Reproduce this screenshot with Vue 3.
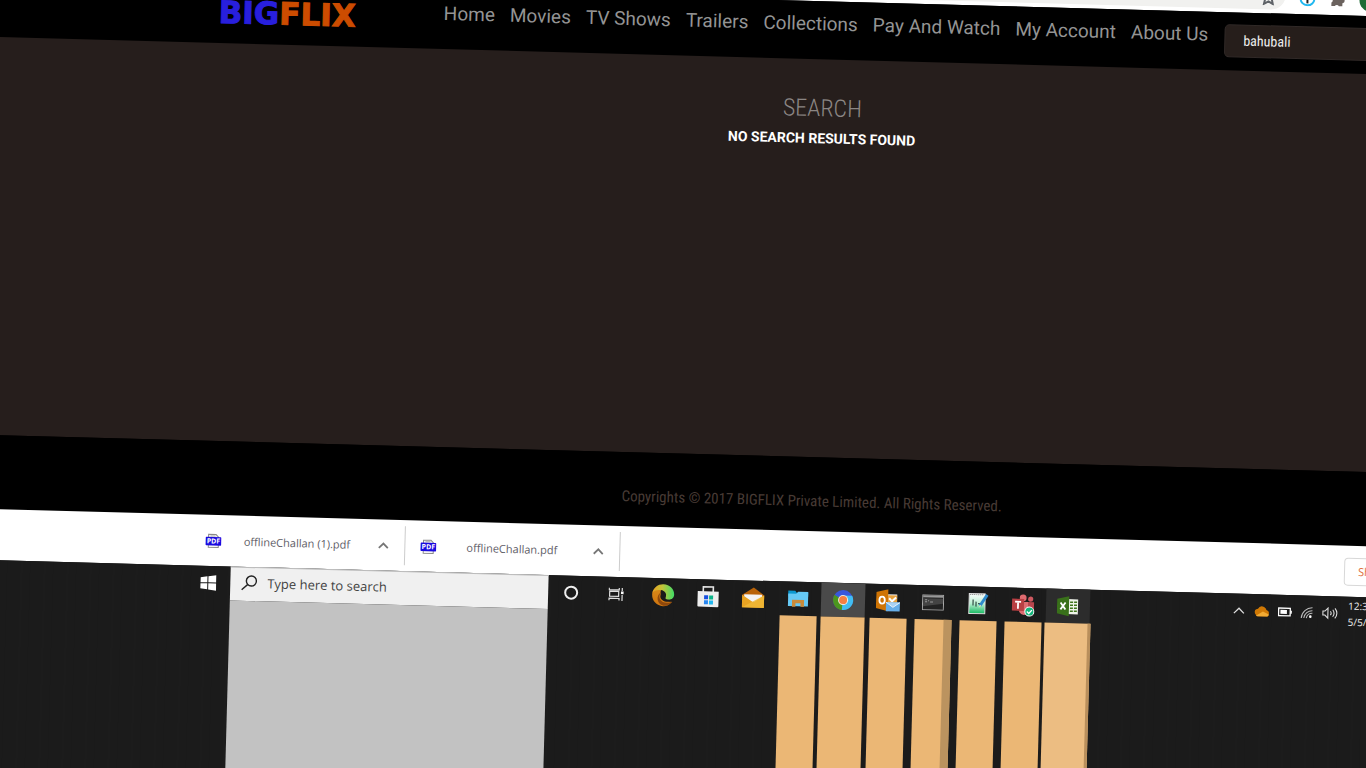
<script setup>
import { ref } from 'vue'

const links = ['Home', 'Movies', 'TV Shows', 'Trailers', 'Collections', 'Pay And Watch', 'My Account', 'About Us']
const query = ref('bahubali')
const taskQuery = ref('')
const files = [
  { name: 'offlineChallan (1).pdf' },
  { name: 'offlineChallan.pdf' },
]
const apps = [
  { id: 'edge', label: 'Edge', bar: '' },
  { id: 'store', label: 'Store', bar: '' },
  { id: 'mail', label: 'Mail', bar: '' },
  { id: 'folder', label: 'File Explorer', bar: 'plain' },
  { id: 'chrome', label: 'Chrome', bar: 'full' },
  { id: 'outlook', label: 'Outlook', bar: 'plain' },
  { id: 'cmd', label: 'Command Prompt', bar: 'stacked' },
  { id: 'notes', label: 'Notepad', bar: 'plain' },
  { id: 'teams', label: 'Teams', bar: 'plain' },
  { id: 'excel', label: 'Excel', bar: 'light' },
]
</script>

<template>
  <div class="viewport">
    <div class="desktop">
      <div class="browser-bar">
        <div class="address">
          <svg class="star" width="16" height="16" viewBox="0 0 16 16"><path d="M8 1l2.1 4.7 5 .5-3.800 3.400 1.100 5L8 12l-4.400 2.600 1.100-5L.9 6.200l5-.5z" fill="none" stroke="#5f6368" stroke-width="2" /></svg>
        </div>
        <svg class="ext" width="16" height="16" viewBox="0 0 16 16"><circle cx="8" cy="8" r="7" fill="#fff" stroke="#22b8f0" stroke-width="2" /><path d="M4.500 5h7L9 9v4H7V9z" fill="#222" /></svg>
        <svg class="ext" width="16" height="16" viewBox="0 0 16 16"><path d="M2 4h3.500a2.200 2.200 0 1 1 4.400 0H13v3.500a2.200 2.200 0 1 1 0 4.400V15H9.500a2.200 2.200 0 0 0-4 0H2v-3.500a2.200 2.200 0 0 0 0-4z" fill="#6b625e" /></svg>
        <span class="avatar">N</span>
      </div>

      <header class="site-header">
        <a class="logo" href="#"><span class="big">BIG</span><span class="flix">FLIX</span></a>
        <nav class="nav">
          <a v-for="link in links" :key="link" href="#">{{ link }}</a>
        </nav>
        <input v-model="query" class="site-search" type="text" aria-label="Search movies">
      </header>

      <main class="content">
        <h1>SEARCH</h1>
        <p>NO SEARCH RESULTS FOUND</p>
      </main>

      <footer class="site-footer">Copyrights © 2017 BIGFLIX Private Limited. All Rights Reserved.</footer>

      <section class="downloads">
        <div v-for="file in files" :key="file.name" class="file">
          <svg width="16" height="16" viewBox="0 0 16 16">
            <path d="M3 5V1.500h7.500L13 4v1M3 12v2.500h10V12" fill="#f4f4f4" stroke="#8a8a8a" />
            <path d="M5 3h5" stroke="#aaa" />
            <rect y="4" width="16" height="8.500" rx="1" fill="#1a0ae0" />
            <text x="8" y="10.500" text-anchor="middle" class="pdf-mark">PDF</text>
          </svg>
          <a href="#">{{ file.name }}</a>
          <button type="button" aria-label="File options">
            <svg width="12" height="8" viewBox="0 0 12 8"><path d="M1.500 6.500L6 2l4.500 4.500" fill="none" stroke="#777" stroke-width="1.800" /></svg>
          </button>
        </div>
        <button class="show-all" type="button">Show all</button>
      </section>

      <section class="taskbar">
        <div class="start">
          <button type="button" aria-label="Start">
            <svg width="16" height="16" viewBox="0 0 16 16" fill="#fff"><path d="M0 2.500l7-1v6H0zM8 1.300L16 .2v7.300H8zM0 8.500h7v6l-7-1zM8 8.500h8v7.300l-8-1.100z" /></svg>
          </button>
        </div>

        <div class="finder">
          <label class="find-box">
            <svg width="18" height="18" viewBox="0 0 18 18" fill="none" stroke="#222" stroke-width="1.400"><circle cx="11" cy="7" r="5" /><path d="M7.300 10.700L1.500 16" /></svg>
            <input v-model="taskQuery" type="text" placeholder="Type here to search" aria-label="Type here to search">
          </label>
          <div class="find-fill"></div>
        </div>

        <div class="tools">
          <button type="button" aria-label="Cortana">
            <svg width="16" height="16" viewBox="0 0 16 16"><circle cx="8" cy="8" r="6" fill="none" stroke="#eee" stroke-width="2" /></svg>
          </button>
          <button type="button" aria-label="Task view">
            <svg width="16" height="16" viewBox="0 0 16 16" fill="none" stroke="#ddd" stroke-width="1.200"><path d="M1 2v2h10V2M1 14.500v-2h10v2M1.500 5.500h9v5h-9zM14 2v3M14 9v6" /><path d="M12.800 5.500h2.600v2.600h-2.600z" fill="#fff" stroke="none" /></svg>
          </button>
        </div>

        <ul class="apps">
          <li v-for="app in apps" :key="app.id">
            <button type="button" :class="app.id" :aria-label="app.label">
              <svg v-if="app.id === 'edge'" width="24" height="24" viewBox="0 0 24 24">
                <defs>
                  <linearGradient id="edgeTop" x1="0" x2="1"><stop offset="0" stop-color="#e8a020" /><stop offset=".45" stop-color="#c3c43a" /><stop offset="1" stop-color="#3fdc66" /></linearGradient>
                  <linearGradient id="edgeSide" x1="0" x2="0" y2="1"><stop offset="0" stop-color="#d98a1a" /><stop offset="1" stop-color="#cf740e" /></linearGradient>
                </defs>
                <path d="M1 12C1 6 5 3 10 6c-2 5 0 11 11 12.500C18.500 21.500 15.500 23 12 23 6 23 1 18 1 12z" fill="url(#edgeSide)" />
                <path d="M1.200 10C2.500 4.500 6.500 1 12 1c6.500 0 11 4.800 11 10 0 3.500-2.500 5.500-5.500 5.500-2.500 0-4-1-3-2.500 1.500-3-.5-6.500-5-7C5.500 6.700 2.500 8 1.200 10z" fill="url(#edgeTop)" />
                <path d="M9.500 9.500c-3.500 5.500 1 11 7.500 10 1.800-.3 3-.8 4.200-1.500C18.500 22 15 23 12.500 22.500 6 21.500 4.500 13 9.500 9.500z" fill="#8e480c" />
                <path d="M11 9.500c2.500 0 4 2 3.300 4.300-.8 2 1 2.900 3.500 2.700 2-.1 3.700-1 4.700-2l-1.500 3c-5 2.500-11.500.5-11.800-4 0-1.700.6-3.200 1.800-4z" fill="#1b1b1b" />
              </svg>
              <svg v-else-if="app.id === 'store'" width="24" height="24" viewBox="0 0 24 24">
                <path d="M7 8V2.500h10V8" fill="none" stroke="#e5e5e5" stroke-width="1.600" />
                <path d="M1.500 7h21v14.500q0 1-1 1h-19q-1 0-1-1z" fill="#eee" />
                <path d="M8 11h4v4H8z" fill="#174fe0" /><path d="M13 11h4v4h-4z" fill="#0cb488" /><path d="M8 16h4v4H8z" fill="#2785ef" /><path d="M13 16h4v4h-4z" fill="#20b7ef" />
              </svg>
              <svg v-else-if="app.id === 'mail'" width="24" height="24" viewBox="0 0 24 24">
                <path d="M1 9.500L12.500 2 23 9.500v4H1z" fill="#b96308" /><path d="M3 9h18v8H3z" fill="#f4f4f4" /><path d="M1 9.500L12.500 17 23 9.500V22H1z" fill="#e9a422" /><path d="M1 22L23 9.500V22z" fill="#f0b938" opacity=".8" />
              </svg>
              <svg v-else-if="app.id === 'folder'" width="22" height="22" viewBox="0 0 22 22">
                <path d="M1 3h7l1.500 2H21v4H1z" fill="#0b98d0" /><path d="M1 6h8l2-2h10v14.500H1z" fill="#66c9f5" /><path d="M5 12h12v7h-3.500v-3.500h-5V19H5z" fill="#c98b3b" />
              </svg>
              <svg v-else-if="app.id === 'chrome'" width="22" height="22" viewBox="0 0 22 22">
                <circle cx="11" cy="11" r="10" fill="#3857dc" /><path d="M2.300 6A10 10 0 0 0 10 21l4.500-8L11 11z" fill="#4c961d" /><path d="M10 21A10 10 0 0 0 20 6.500h-9z" fill="#41bdf2" /><circle cx="11" cy="11" r="5" fill="#f1ece5" /><circle cx="11" cy="11" r="4" fill="#f57f43" />
              </svg>
              <svg v-else-if="app.id === 'outlook'" width="24" height="24" viewBox="0 0 24 24">
                <path d="M11 5h10v12H11z" fill="#eee" /><path d="M12 6h9v9h-9z" fill="#e9a23c" /><path d="M13 9l3 3 4-4" fill="none" stroke="#fff" stroke-width="2" />
                <path d="M0 3l12-3v22L0 19z" fill="#cf7404" /><ellipse cx="6" cy="11" rx="2.700" ry="3.500" fill="none" stroke="#fff" stroke-width="1.800" />
                <path d="M10 13h14v9H10z" fill="#66aee9" /><path d="M10 13l7 5 7-5" fill="#a9d2f5" stroke="#fff" stroke-width=".8" />
              </svg>
              <svg v-else-if="app.id === 'cmd'" width="22" height="16" viewBox="0 0 22 16">
                <path d="M.5.500h21v15H.5z" fill="#222" stroke="#aaa" /><path d="M1 1h20v2H1z" fill="#999" /><path d="M1 4h20v5L1 12z" fill="#444" /><path d="M3 5.500h2M6 6.500h1M8 7.500h3M3 7.500h2" stroke="#999" />
              </svg>
              <svg v-else-if="app.id === 'notes'" width="22" height="22" viewBox="0 0 22 22">
                <defs><linearGradient id="sheet" x2="0" y2="1"><stop offset="0" stop-color="#fff" /><stop offset=".5" stop-color="#b9f0d2" /><stop offset="1" stop-color="#15b85f" /></linearGradient></defs>
                <path d="M2 1h16v20H2z" fill="url(#sheet)" stroke="#ddd" /><path d="M3 2h14" stroke="#777" stroke-dasharray="1 1" /><path d="M6 7v6M9 9v5M11 11h3" stroke="#304c42" stroke-width="1.200" /><path d="M20 2l-7 11" stroke="#2f8bcc" stroke-width="3" /><path d="M13 12l-1.200 3 2.600-2z" fill="#e8dfb5" />
              </svg>
              <svg v-else-if="app.id === 'teams'" width="24" height="24" viewBox="0 0 24 24">
                <circle cx="12" cy="5" r="3.400" fill="#df6b70" /><circle cx="19.500" cy="6" r="2.600" fill="#ce5960" /><path d="M8 9h10v8q-1 5-5 5-5-1-5-5z" fill="#dc6d72" /><path d="M17 9h6v8q-1 3-4 3h-2z" fill="#b8464d" />
                <path d="M1 6h12v12H1z" fill="#b83f43" /><path d="M4 9h6M7 9v7" stroke="#fff" stroke-width="1.800" /><circle cx="18.500" cy="18.500" r="4.500" fill="#14b77c" stroke="#fff" /><path d="M16 18.500l2 2 3-3.500" fill="none" stroke="#fff" stroke-width="1.400" />
              </svg>
              <svg v-else width="22" height="22" viewBox="0 0 22 22">
                <path d="M10 4h11v15H10z" fill="#f0f4eb" /><path d="M13 7h3M17 7h3M13 10h3M17 10h3M13 13h3M17 13h3M13 16h3M17 16h3" stroke="#40751c" stroke-width="1.500" /><path d="M0 4l12-3v20L0 18.500z" fill="#39701a" /><path d="M3.500 7.500l5 7M8.500 7.500l-5 7" stroke="#fff" stroke-width="1.800" />
              </svg>
            </button>
            <div class="bar" :class="app.bar"></div>
          </li>
        </ul>

        <div class="tray">
          <svg width="14" height="14" viewBox="0 0 14 14"><path d="M2 9.500L7 4.500l5 5" fill="none" stroke="#ddd" stroke-width="1.300" /></svg>
          <svg width="16" height="14" viewBox="0 0 16 14"><path d="M1 9q-1-4 3-4.500 2-4 6-2 2 1 2.500 3 3 1 2.500 4L14 12H3z" fill="#cf7804" /><path d="M2 11.500L9 7l6 3q0 2-2 2H4z" fill="#f1aa33" /></svg>
          <svg width="14" height="14" viewBox="0 0 14 14"><path d="M.7 3.200h11.600v7.600H.7z" fill="none" stroke="#fff" stroke-width="1.300" /><path d="M2.500 5h6.500v4H2.500zM12.500 5.500H14v3h-1.500z" fill="#fff" /></svg>
          <svg width="14" height="14" viewBox="0 0 14 14" fill="none" stroke="#bbb" stroke-width="1.100"><path d="M1.500 12.500A11 11 0 0 1 12.500 2M4 12.500A8.500 8.500 0 0 1 12.500 5M6.500 12.500A6 6 0 0 1 12.500 7.500" /><circle cx="10.500" cy="11" r="1.300" fill="#fff" stroke="none" /></svg>
          <svg width="16" height="14" viewBox="0 0 16 14" fill="none" stroke="#ddd" stroke-width="1.100"><path d="M1 5h2l3-3v10l-3-3H1zM8.500 5q1.500 2 0 4M10.800 3.500q2.700 3.500 0 7M13 2q4 5 0 10" /></svg>
          <time class="clock">12:35 PM<br>5/5/2021</time>
        </div>
      </section>
    </div>
  </div>
</template>

<style>
body {
  margin: 0;
  background: #1b1b1b;
}
</style>

<style scoped>
* {
  box-sizing: border-box;
}

.viewport {
  height: 100vh;
  overflow: hidden;
  background: #000;
}

/* The whole desktop leans clockwise and runs past the window's right edge. */
.desktop {
  display: flex;
  flex-direction: column;
  width: calc(100% + 284px);
  height: calc(100vh + 80px);
  margin-top: -40px;
  transform: rotate(1.55deg);
  transform-origin: 0 40px;
  font-family: Roboto, sans-serif;
}

button {
  display: flex;
  align-items: center;
  justify-content: center;
  padding: 0;
  border: 0;
  background: none;
}

a {
  color: inherit;
  text-decoration: none;
}

svg {
  flex: none;
}

.browser-bar {
  display: flex;
  align-items: flex-end;
  gap: 14px;
  flex: none;
  height: 19px;
  padding-bottom: 4px;
  background: #fff;
}

.address {
  display: flex;
  justify-content: flex-end;
  align-items: flex-end;
  width: 1285px;
  height: 15px;
  padding: 0 9px 4px 0;
  border-radius: 0 0 14px 0;
  background: #f1f1ef;
}

.ext {
  margin-bottom: 4px;
}

.avatar {
  width: 24px;
  height: 24px;
  border-radius: 50%;
  background: #1d6b35;
  color: #fff;
  font-size: 14px;
  line-height: 24px;
  text-align: center;
}

.site-header {
  display: flex;
  align-items: center;
  flex: none;
  height: 58px;
  background: #000;
}

.logo {
  width: 225px;
  margin: 0 0 5px 219px;
  font-family: "DejaVu Sans", sans-serif;
  font-size: 31px;
  font-weight: 700;
  line-height: 32px;
  -webkit-text-stroke: 1px currentColor;
}

.big {
  color: #281fdd;
}

.flix {
  color: #cc4c00;
}

.nav {
  display: flex;
  gap: 15px;
  width: 781px;
  height: 34px;
  color: #949494;
  font-size: 19px;
  line-height: 22px;
  white-space: nowrap;
}

.site-search {
  width: 240px;
  height: 33px;
  margin-bottom: 2px;
  padding: 0 18px;
  border: 1px solid #302927;
  border-radius: 5px;
  background: #261e1b;
  color: #eee;
  font-family: "Roboto Condensed", Roboto, sans-serif;
  font-size: 14px;
}

.content {
  flex: none;
  height: 398px;
  padding-top: 33px;
  background: #261e1c;
  text-align: center;
}

.content h1 {
  margin: 0;
  color: #8b8684;
  font-family: "Roboto Condensed", Roboto, sans-serif;
  font-size: 24px;
  font-weight: 300;
  line-height: 32px;
}

.content p {
  margin: 0;
  color: #fff;
  font-size: 14px;
  font-weight: 700;
  line-height: 28px;
}

.site-footer {
  flex: none;
  height: 74px;
  padding-top: 34px;
  background: #000;
  color: #483b35;
  font-family: "Roboto Condensed", Roboto, sans-serif;
  font-size: 15px;
  line-height: 20px;
  text-align: center;
}

.downloads {
  display: flex;
  align-items: center;
  flex: none;
  height: 51px;
  padding-left: 205px;
  background: #fff;
  font-family: "Open Sans", sans-serif;
}

.file {
  display: flex;
  align-items: center;
  width: 215px;
  height: 39px;
  padding: 0 15px;
  border-right: 1px solid #ccc;
  color: #5f6068;
  font-size: 11px;
}

.file a {
  flex: 1;
  padding-right: 5px;
  text-align: center;
}

.pdf-mark {
  fill: #fff;
  font-family: "Open Sans", sans-serif;
  font-size: 7px;
  font-weight: 700;
}

.show-all {
  justify-content: flex-start;
  width: 90px;
  height: 28px;
  margin-left: 724px;
  padding-left: 13px;
  border: 1px solid #d8d8d8;
  border-radius: 4px;
  color: #e07040;
  font-family: "Open Sans", sans-serif;
  font-size: 11px;
}

.taskbar {
  display: flex;
  flex: 1;
  background: repeating-linear-gradient(90deg, #1b1b1b 0 13px, #1c1c1c 13px 15px, #1b1b1b 15px 22px, #1a1a1a 22px 23px);
}

.start {
  width: 246px;
  padding-left: 201px;
}

.start button,
.tools button {
  width: 45px;
  height: 34px;
}

.finder {
  display: flex;
  flex-direction: column;
  width: 318px;
}

.find-box {
  display: flex;
  align-items: center;
  gap: 9px;
  height: 34px;
  padding: 0 0 3px 10px;
  border-top: 1px solid #bbb;
  background: #f0f0f0;
}

.find-box input {
  flex: 1;
  min-width: 0;
  padding: 0;
  border: 0;
  background: none;
  font-family: "Open Sans", sans-serif;
  font-size: 13px;
}

.find-box input::placeholder {
  color: #444;
  opacity: 1;
}

.find-fill {
  flex: 1;
  background: #c2c2c2;
}

.tools {
  display: flex;
  width: 93px;
}

.apps {
  display: flex;
  gap: 1px;
  margin: 0;
  padding: 0;
  list-style: none;
}

.apps li {
  display: flex;
  flex-direction: column;
  align-items: center;
  width: 44px;
}

.apps button {
  width: 44px;
  height: 34px;
}

.apps .chrome {
  background: #4a4a4a;
}

.apps .excel {
  background: #2c2c2c;
}

.bar {
  flex: 1;
  width: 37px;
}

.plain,
.full {
  background: #ebb775;
}

.full {
  width: 44px;
}

.stacked {
  border-right: 8px solid #bb935f;
  background: #ebb775;
}

.light {
  width: 46px;
  border-right: 3px solid #b98f5c;
  background: #ecbd82;
}

.tray {
  display: flex;
  align-items: center;
  gap: 8px;
  height: 34px;
  margin-left: 142px;
}

.clock {
  margin-left: 2px;
  color: #eee;
  font-family: "Open Sans", sans-serif;
  font-size: 10px;
  line-height: 16px;
  white-space: nowrap;
}
</style>
